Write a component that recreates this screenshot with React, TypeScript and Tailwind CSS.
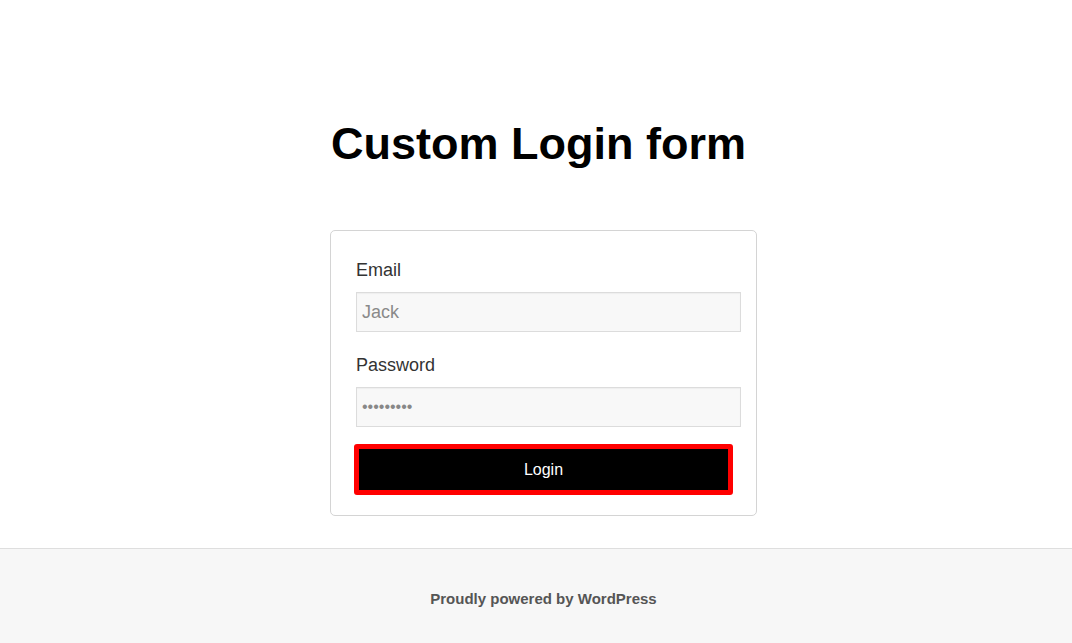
export default function App() {
  return (
    <div className="flex min-h-[643px] flex-col bg-white font-['Liberation_Sans',Arial,sans-serif]">
      <main className="flex flex-1 flex-col items-center pl-[15px]">
        <h1 className="mt-[117px] pr-[10px] text-[45px] font-bold leading-[54px] text-black">
          Custom Login form
        </h1>

        <form
          className="mt-[59px] flex w-[427px] flex-col rounded-[5px] border border-[#d4d4d4] pb-[20px] pl-[25px] pr-[15px] pt-[26px]"
          onSubmit={(e) => e.preventDefault()}
        >
          <label className="text-[18px] leading-[27px] text-[#333]">Email</label>
          <input
            type="text"
            placeholder="Jack"
            className="mt-[8px] h-[40px] w-[385px] border border-[#dcdcdc] bg-[#f8f8f8] px-[5px] text-[18px] text-[#777] shadow-[inset_0_1px_1px_rgba(0,0,0,0.04)] outline-none placeholder:text-[#8a8a8a]"
          />

          <label className="mt-[20px] text-[18px] leading-[27px] text-[#333]">Password</label>
          <input
            type="password"
            defaultValue="password1"
            className="mt-[8px] h-[40px] w-[385px] border border-[#dcdcdc] bg-[#f8f8f8] px-[5px] text-[16px] text-[#888] shadow-[inset_0_1px_1px_rgba(0,0,0,0.04)] outline-none"
          />

          <button
            type="submit"
            className="-ml-[2px] mt-[17px] h-[51px] w-[379px] rounded-[3px] border-[5px] border-[#f00] bg-black text-[16px] text-white"
          >
            Login
          </button>
        </form>
      </main>

      <footer className="mt-[32px] flex h-[95px] items-start justify-center border-t border-[#dedede] bg-[#f7f7f7] pl-[15px] pt-[40px]">
        <p className="text-[15px] font-bold leading-[20px] text-[#555]">Proudly powered by WordPress</p>
      </footer>
    </div>
  );
}
